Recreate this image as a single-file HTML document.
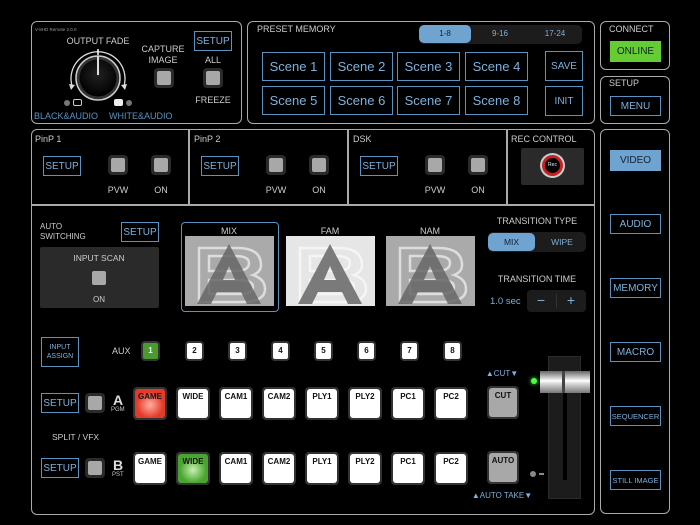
<!DOCTYPE html>
<html><head><meta charset="utf-8"><style>
*{box-sizing:border-box;margin:0;padding:0}
body{width:700px;height:525px;background:#000;position:relative;overflow:hidden;font-family:"Liberation Sans",sans-serif;color:#ccc}
.a{position:absolute}
.pn{position:absolute;border:1.5px solid #aaa;border-radius:6px}
.t{position:absolute;font-size:9px;color:#ccc;white-space:nowrap}
.c{text-align:center;transform:translateX(-50%)}
.bb{position:absolute;border:1.5px solid #5b92c0;color:#7fb0da;font-size:10px;display:flex;align-items:center;justify-content:center;white-space:nowrap}
.sq{position:absolute;width:20px;height:20px;background:#2a2a2a;border-radius:4px;padding:3px}
.sq i{display:block;width:100%;height:100%;background:#a8a8a8;border-radius:2px}
.sw{position:absolute;width:34px;height:33px;background:#333;border-radius:4px;padding:2px}
.sw div{width:100%;height:100%;background:#fff;border-radius:3px;font-size:8px;font-weight:bold;color:#111;padding-top:3px;text-align:center}
.ax{position:absolute;width:19px;height:20px;background:#333;border-radius:4px;padding:2px}
.ax div{width:100%;height:100%;background:#fff;border-radius:2px;font-size:8px;font-weight:bold;color:#111;text-align:center;line-height:16px}
.th{position:absolute;width:89px;height:70px}
</style></head><body>
<!-- top-left -->
<div class="pn" style="left:31px;top:21px;width:211px;height:103px"></div>
<div class="t" style="left:35px;top:27px;font-size:4.5px;color:#999">V-8HD Remote 2.0.0</div>
<div class="t c" style="left:98px;top:36px;font-size:9px">OUTPUT FADE</div>
<svg class="a" style="left:66px;top:48px" width="64" height="56" viewBox="0 0 64 56">
<defs><radialGradient id="kg" cx="50%" cy="40%" r="60%"><stop offset="0" stop-color="#222"/><stop offset="1" stop-color="#000"/></radialGradient></defs>
<path d="M6 38 A27 27 0 1 1 58 38" fill="none" stroke="#ddd" stroke-width="1.3"/>
<path d="M3 36 l6 1 -4 5z M61 36 l-6 1 4 5z" fill="#ddd"/>
<line x1="32" y1="1" x2="32" y2="7" stroke="#fff" stroke-width="1.5"/>
<circle cx="32" cy="30" r="22" fill="#333" stroke="#ccc" stroke-width="1.5"/>
<circle cx="32" cy="30" r="18.5" fill="url(#kg)"/>
<line x1="32" y1="8" x2="32" y2="27" stroke="#ddd" stroke-width="2"/>
</svg>
<div class="a" style="left:64px;top:100px;width:6px;height:6px;border-radius:50%;background:#777"></div>
<div class="a" style="left:73px;top:99px;width:9px;height:7px;border:1.2px solid #ccc;border-radius:2px"></div>
<div class="a" style="left:114px;top:99px;width:9px;height:7px;background:#eee;border-radius:2px"></div>
<div class="a" style="left:126px;top:100px;width:6px;height:6px;border-radius:50%;background:#777"></div>
<div class="t" style="left:34px;top:111px;color:#5b92c0;font-size:9px">BLACK&amp;AUDIO</div>
<div class="t" style="left:109px;top:111px;color:#5b92c0;font-size:9px">WHITE&amp;AUDIO</div>
<div class="t c" style="left:163px;top:44px;line-height:11px">CAPTURE<br>IMAGE</div>
<div class="sq" style="left:154px;top:68px"><i></i></div>
<div class="bb" style="left:194px;top:31px;width:38px;height:20px">SETUP</div>
<div class="t c" style="left:213px;top:55px">ALL</div>
<div class="sq" style="left:203px;top:68px"><i></i></div>
<div class="t c" style="left:213px;top:95px">FREEZE</div>
<!-- preset -->
<div class="pn" style="left:247px;top:21px;width:348px;height:103px"></div>
<div class="t" style="left:257px;top:24px">PRESET MEMORY</div>
<div class="a" style="left:419px;top:25px;width:163px;height:19px;background:#1c1c1c;border-radius:5px"></div>
<div class="a" style="left:419px;top:25px;width:52px;height:18px;background:#6fa3d0;border-radius:5px;color:#123;font-size:8px;text-align:center;line-height:18px">1-8</div>
<div class="t c" style="left:500px;top:29px;color:#7fb0da;font-size:8px">9-16</div>
<div class="t c" style="left:555px;top:29px;color:#7fb0da;font-size:8px">17-24</div>
<div class="bb" style="left:262px;top:52px;width:63px;height:29px;font-size:13px">Scene 1</div>
<div class="bb" style="left:330px;top:52px;width:63px;height:29px;font-size:13px">Scene 2</div>
<div class="bb" style="left:397px;top:52px;width:63px;height:29px;font-size:13px">Scene 3</div>
<div class="bb" style="left:465px;top:52px;width:63px;height:29px;font-size:13px">Scene 4</div>
<div class="bb" style="left:262px;top:86px;width:63px;height:29px;font-size:13px">Scene 5</div>
<div class="bb" style="left:330px;top:86px;width:63px;height:29px;font-size:13px">Scene 6</div>
<div class="bb" style="left:397px;top:86px;width:63px;height:29px;font-size:13px">Scene 7</div>
<div class="bb" style="left:465px;top:86px;width:63px;height:29px;font-size:13px">Scene 8</div>
<div class="bb" style="left:545px;top:51px;width:38px;height:30px">SAVE</div>
<div class="bb" style="left:545px;top:86px;width:38px;height:30px">INIT</div>
<!-- right -->
<div class="pn" style="left:600px;top:21px;width:70px;height:49px"></div>
<div class="t" style="left:609px;top:24px">CONNECT</div>
<div class="a" style="left:610px;top:41px;width:51px;height:21px;background:#66cc33;color:#123;font-size:10px;text-align:center;line-height:21px">ONLINE</div>
<div class="pn" style="left:600px;top:76px;width:70px;height:48px"></div>
<div class="t" style="left:609px;top:78px">SETUP</div>
<div class="bb" style="left:610px;top:96px;width:51px;height:20px">MENU</div>
<div class="pn" style="left:600px;top:129px;width:70px;height:385px"></div>
<div class="a" style="left:610px;top:150px;width:51px;height:21px;background:#6fa3d0;color:#123;font-size:10px;text-align:center;line-height:21px">VIDEO</div>
<div class="bb" style="left:610px;top:214px;width:51px;height:20px">AUDIO</div>
<div class="bb" style="left:610px;top:278px;width:51px;height:20px">MEMORY</div>
<div class="bb" style="left:610px;top:342px;width:51px;height:20px">MACRO</div>
<div class="bb" style="left:610px;top:406px;width:51px;height:20px;font-size:7.5px">SEQUENCER</div>
<div class="bb" style="left:610px;top:470px;width:51px;height:20px;font-size:7.5px">STILL IMAGE</div>
<!-- main -->
<div class="pn" style="left:31px;top:129px;width:564px;height:386px"></div>
<div class="a" style="left:31px;top:204px;width:564px;height:1.5px;background:#aaa"></div>
<div class="a" style="left:188px;top:129px;width:1.5px;height:76px;background:#aaa"></div>
<div class="a" style="left:347px;top:129px;width:1.5px;height:76px;background:#aaa"></div>
<div class="a" style="left:506px;top:129px;width:1.5px;height:76px;background:#aaa"></div>
<div class="t" style="left:35px;top:134px">PinP 1</div>
<div class="bb" style="left:43px;top:156px;width:38px;height:20px">SETUP</div>
<div class="sq" style="left:108px;top:155px"><i></i></div><div class="sq" style="left:151px;top:155px"><i></i></div>
<div class="t c" style="left:118px;top:185px">PVW</div><div class="t c" style="left:161px;top:185px">ON</div>
<div class="t" style="left:194px;top:134px">PinP 2</div>
<div class="bb" style="left:201px;top:156px;width:38px;height:20px">SETUP</div>
<div class="sq" style="left:266px;top:155px"><i></i></div><div class="sq" style="left:309px;top:155px"><i></i></div>
<div class="t c" style="left:276px;top:185px">PVW</div><div class="t c" style="left:319px;top:185px">ON</div>
<div class="t" style="left:353px;top:134px">DSK</div>
<div class="bb" style="left:360px;top:156px;width:38px;height:20px">SETUP</div>
<div class="sq" style="left:425px;top:155px"><i></i></div><div class="sq" style="left:468px;top:155px"><i></i></div>
<div class="t c" style="left:435px;top:185px">PVW</div><div class="t c" style="left:478px;top:185px">ON</div>
<div class="t" style="left:511px;top:134px">REC CONTROL</div>
<div class="a" style="left:521px;top:148px;width:63px;height:37px;background:#2a2a2a;border-radius:2px"></div>
<div class="a" style="left:540px;top:153px;width:25px;height:25px;border-radius:50%;background:#ccc;padding:2px"><div style="width:100%;height:100%;border-radius:50%;background:#c82020;padding:3px"><div style="width:100%;height:100%;border-radius:50%;background:#000;color:#eee;font-size:5px;text-align:center;line-height:15px">Rec</div></div></div>
<!-- auto switching -->
<div class="t" style="left:40px;top:222px;font-size:8px;line-height:10px">AUTO<br>SWITCHING</div>
<div class="bb" style="left:121px;top:222px;width:38px;height:20px">SETUP</div>
<div class="a" style="left:40px;top:247px;width:119px;height:61px;background:#2a2a2a;border-radius:2px"></div>
<div class="t c" style="left:99px;top:253px;font-size:8.5px">INPUT SCAN</div>
<div class="sq" style="left:89px;top:268px"><i></i></div>
<div class="t c" style="left:99px;top:295px;font-size:8px">ON</div>
<div class="a" style="left:181px;top:222px;width:98px;height:90px;border:1.5px solid #5b92c0;border-radius:4px"></div>
<div class="t c" style="left:229px;top:226px">MIX</div>
<div class="t c" style="left:330px;top:226px">FAM</div>
<div class="t c" style="left:430px;top:226px">NAM</div>
<svg width="0" height="0" style="position:absolute"><defs><g id="ab"><path d="M14 12 H52 Q76 12 76 29 Q76 36 68 39 Q80 43 80 53 Q80 66 56 66 H14 Z M24 20 V35 H50 Q64 35 64 27 Q64 20 50 20 Z M24 44 V58 H54 Q68 58 68 51 Q68 44 54 44 Z" fill="none" stroke="#fff" stroke-opacity=".6" stroke-width="2.5"/><path d="M44 8 L12 68 H26 L32 56 H56 L62 68 H76 Z M38 44 L44 30 L50 44 Z" fill="#666" fill-opacity=".85" fill-rule="evenodd"/></g></defs></svg>
<svg class="th" style="left:185px;top:236px;background:#aaa" viewBox="0 0 89 70"><use href="#ab"/></svg>
<svg class="th" style="left:286px;top:236px;background:#e6e6e6" viewBox="0 0 89 70"><use href="#ab"/></svg>
<svg class="th" style="left:386px;top:236px;background:#aaa" viewBox="0 0 89 70"><use href="#ab"/></svg>
<div class="t c" style="left:537px;top:216px">TRANSITION TYPE</div>
<div class="a" style="left:488px;top:232px;width:98px;height:20px;background:#1c1c1c;border-radius:5px"></div>
<div class="a" style="left:488px;top:233px;width:47px;height:18px;background:#6fa3d0;border-radius:5px;color:#123;font-size:8.5px;text-align:center;line-height:18px">MIX</div>
<div class="t c" style="left:562px;top:237px;color:#7fb0da;font-size:8.5px">WIPE</div>
<div class="t c" style="left:537px;top:274px">TRANSITION TIME</div>
<div class="t" style="left:490px;top:296px;color:#7fb0da;font-size:9.5px">1.0 sec</div>
<div class="a" style="left:527px;top:290px;width:59px;height:22px;background:#1c1c1c;border-radius:4px"></div>
<div class="a" style="left:556px;top:294px;width:1px;height:14px;background:#333"></div>
<div class="t c" style="left:541px;top:292px;color:#7fb0da;font-size:14px">−</div>
<div class="t c" style="left:571px;top:292px;color:#7fb0da;font-size:14px">+</div>
<!-- aux -->
<div class="bb" style="left:41px;top:337px;width:38px;height:30px;font-size:7px;line-height:9px;text-align:center">INPUT<br>ASSIGN</div>
<div class="t" style="left:112px;top:346px">AUX</div>
<div class="ax" style="left:141px;top:341px"><div style="background:#4a9a30;color:#eee">1</div></div>
<div class="ax" style="left:185px;top:341px"><div>2</div></div>
<div class="ax" style="left:228px;top:341px"><div>3</div></div>
<div class="ax" style="left:271px;top:341px"><div>4</div></div>
<div class="ax" style="left:314px;top:341px"><div>5</div></div>
<div class="ax" style="left:357px;top:341px"><div>6</div></div>
<div class="ax" style="left:400px;top:341px"><div>7</div></div>
<div class="ax" style="left:443px;top:341px"><div>8</div></div>
<!-- A row -->
<div class="bb" style="left:41px;top:393px;width:38px;height:20px">SETUP</div>
<div class="sq" style="left:85px;top:393px"><i></i></div>
<div class="t" style="left:113px;top:392px;font-size:14px;font-weight:bold;color:#ddd">A</div>
<div class="t" style="left:111px;top:407px;font-size:6px">PGM</div>
<div class="sw" style="left:133px;top:387px"><div style="background:radial-gradient(circle at 50% 55%,#ffb0a0,#e43a2a 60%);">GAME</div></div>
<div class="sw" style="left:176px;top:387px"><div>WIDE</div></div>
<div class="sw" style="left:219px;top:387px"><div>CAM1</div></div>
<div class="sw" style="left:262px;top:387px"><div>CAM2</div></div>
<div class="sw" style="left:305px;top:387px"><div>PLY1</div></div>
<div class="sw" style="left:348px;top:387px"><div>PLY2</div></div>
<div class="sw" style="left:391px;top:387px"><div>PC1</div></div>
<div class="sw" style="left:434px;top:387px"><div>PC2</div></div>
<div class="t c" style="left:502px;top:369px;color:#7fb0da;font-size:8px">▲CUT▼</div>
<div class="sw" style="left:487px;top:386px;width:32px;height:33px"><div style="background:#a8a8a8">CUT</div></div>
<div class="t" style="left:52px;top:432px;font-size:8.5px">SPLIT / VFX</div>
<!-- B row -->
<div class="bb" style="left:41px;top:458px;width:38px;height:20px">SETUP</div>
<div class="sq" style="left:85px;top:458px"><i></i></div>
<div class="t" style="left:113px;top:457px;font-size:14px;font-weight:bold;color:#ddd">B</div>
<div class="t" style="left:112px;top:472px;font-size:6px">PST</div>
<div class="sw" style="left:133px;top:452px"><div>GAME</div></div>
<div class="sw" style="left:176px;top:452px"><div style="background:radial-gradient(circle at 50% 55%,#c8f0b0,#4aa530 60%);">WIDE</div></div>
<div class="sw" style="left:219px;top:452px"><div>CAM1</div></div>
<div class="sw" style="left:262px;top:452px"><div>CAM2</div></div>
<div class="sw" style="left:305px;top:452px"><div>PLY1</div></div>
<div class="sw" style="left:348px;top:452px"><div>PLY2</div></div>
<div class="sw" style="left:391px;top:452px"><div>PC1</div></div>
<div class="sw" style="left:434px;top:452px"><div>PC2</div></div>
<div class="sw" style="left:487px;top:451px;width:32px;height:33px"><div style="background:#a8a8a8">AUTO</div></div>
<div class="t c" style="left:502px;top:491px;color:#7fb0da;font-size:8px">▲AUTO TAKE▼</div>
<!-- fader -->
<div class="a" style="left:548px;top:356px;width:33px;height:143px;background:#1c1c1c;border:1px solid #2a2a2a"></div>
<div class="a" style="left:563px;top:390px;width:4px;height:90px;background:#000"></div>
<div class="a" style="left:540px;top:371px;width:50px;height:22px;background:linear-gradient(#666,#fff 45%,#ddd 55%,#777)"></div>
<div class="a" style="left:562px;top:371px;width:3px;height:22px;background:#444"></div>
<div class="a" style="left:531px;top:378px;width:6px;height:6px;border-radius:50%;background:#4f4;box-shadow:0 0 4px #4f4"></div>
<div class="a" style="left:530px;top:471px;width:6px;height:6px;border-radius:50%;background:#888"></div>
<div class="a" style="left:539px;top:473px;width:5px;height:1.5px;background:#888"></div>
</body></html>
